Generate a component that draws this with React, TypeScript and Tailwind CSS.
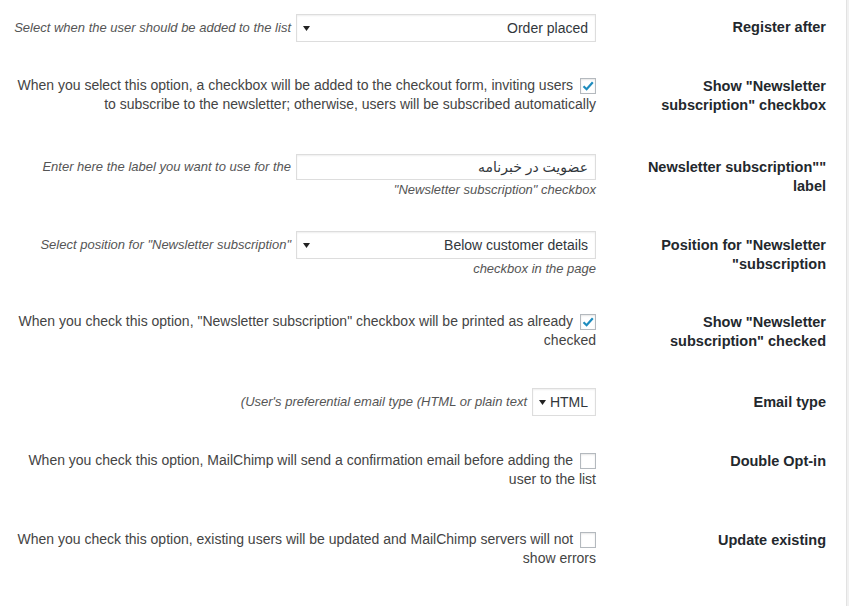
import React from 'react';

// Dropdown drawn like a WP admin <select>; RTL puts the value on the right and the arrow on the left
function Dropdown({ value, width }: { value: string; width: string }) {
  return (
    <span
      className={`${width} inline-flex h-[28px] items-center justify-between border border-[#ddd] bg-white pr-[7px] pl-[6px] align-middle text-[14px] leading-none text-[#32373c] shadow-[inset_0_1px_2px_rgba(0,0,0,0.07)]`}
    >
      <span>{value}</span>
      <svg width="7" height="5" viewBox="0 0 7 5">
        <path d="M0 0h7L3.5 5z" fill="#222" />
      </svg>
    </span>
  );
}

function TextInput({ value }: { value: string }) {
  return (
    <span className="inline-flex h-[26px] w-[300px] items-center border border-[#ddd] bg-white px-[7px] align-middle text-[14px] leading-none text-[#32373c] shadow-[inset_0_1px_2px_rgba(0,0,0,0.07)]">
      {value}
    </span>
  );
}

function Checkbox({ checked }: { checked?: boolean }) {
  return (
    <span className="mt-[2px] ml-[3px] inline-flex h-[16px] w-[16px] items-center justify-center border border-[#b4b9be] bg-white align-top shadow-[inset_0_1px_2px_rgba(0,0,0,0.1)]">
      {checked && (
        <svg width="14" height="14" viewBox="0 0 14 14">
          <path d="M2.5 7.2 5.6 10.2 11.8 3.2" fill="none" stroke="#1e8cbe" strokeWidth="2.2" />
        </svg>
      )}
    </span>
  );
}

function Description({ children, dir }: { children: React.ReactNode; dir?: 'ltr' | 'rtl' }) {
  return (
    <span dir={dir} className="mr-[5px] text-[13px] italic leading-[18px] text-[#555]">
      {children}
    </span>
  );
}

function CheckOption({ checked, text }: { checked?: boolean; text: string }) {
  return (
    <label className="block text-[14px] leading-[19px] text-[#444]">
      <Checkbox checked={checked} /> {text}
    </label>
  );
}

interface Row {
  label: string;
  height: string;
  pad: string;
  field: React.ReactNode;
}

const rows: Row[] = [
  {
    label: 'Register after',
    height: 'h-[59px]',
    pad: 'pt-[14px] leading-[18px]',
    field: (
      <>
        <Dropdown value="Order placed" width="w-[300px]" />
        <Description>Select when the user should be added to the list</Description>
      </>
    ),
  },
  {
    label: 'Show "Newsletter subscription" checkbox',
    height: 'h-[81px]',
    pad: 'pt-[17px] leading-[19px]',
    field: (
      <CheckOption
        checked
        text="When you select this option, a checkbox will be added to the checkout form, inviting users to subscribe to the newsletter; otherwise, users will be subscribed automatically"
      />
    ),
  },
  {
    label: '"Newsletter subscription" label',
    height: 'h-[78px]',
    pad: 'pt-[14px] leading-[18px]',
    field: (
      <>
        <TextInput value="عضویت در خبرنامه" />
        <Description>Enter here the label you want to use for the "Newsletter subscription" checkbox</Description>
      </>
    ),
  },
  {
    label: 'Position for "Newsletter subscription"',
    height: 'h-[77px]',
    pad: 'pt-[13px] leading-[18px]',
    field: (
      <>
        <Dropdown value="Below customer details" width="w-[300px]" />
        <Description>Select position for "Newsletter subscription" checkbox in the page</Description>
      </>
    ),
  },
  {
    label: 'Show "Newsletter subscription" checked',
    height: 'h-[80px]',
    pad: 'pt-[17px] leading-[19px]',
    field: (
      <CheckOption
        checked
        text={'When you check this option, "Newsletter subscription" checkbox will be printed as already checked'}
      />
    ),
  },
  {
    label: 'Email type',
    height: 'h-[59px]',
    pad: 'pt-[13px] leading-[18px]',
    field: (
      <>
        <Dropdown value="HTML" width="w-[64px]" />
        <Description dir="ltr">(User's preferential email type (HTML or plain text</Description>
      </>
    ),
  },
  {
    label: 'Double Opt-in',
    height: 'h-[79px]',
    pad: 'pt-[17px] leading-[19px]',
    field: (
      <CheckOption text="When you check this option, MailChimp will send a confirmation email before adding the user to the list" />
    ),
  },
  {
    label: 'Update existing',
    height: 'h-[79px]',
    pad: 'pt-[17px] leading-[19px]',
    field: (
      <CheckOption text="When you check this option, existing users will be updated and MailChimp servers will not show errors" />
    ),
  },
];

export default function App() {
  return (
    <div className="flex min-h-screen bg-[#f1f1f1] font-['Liberation_Sans','DejaVu_Sans',sans-serif]">
      <div dir="rtl" className="min-h-screen w-[847px] shrink-0 border-r border-[#e2e2e2] bg-white pr-[20px]">
        {rows.map((row) => (
          <div key={row.label} className={`flex items-start ${row.height}`}>
            <div className="w-[210px] shrink-0 pt-[18px] pl-[10px] text-[14.5px] font-bold leading-[18.5px] text-[#23282d]">
              {row.label}
            </div>
            <div className={`flex-1 pr-[20px] pl-[10px] ${row.pad}`}>{row.field}</div>
          </div>
        ))}
      </div>
    </div>
  );
}
